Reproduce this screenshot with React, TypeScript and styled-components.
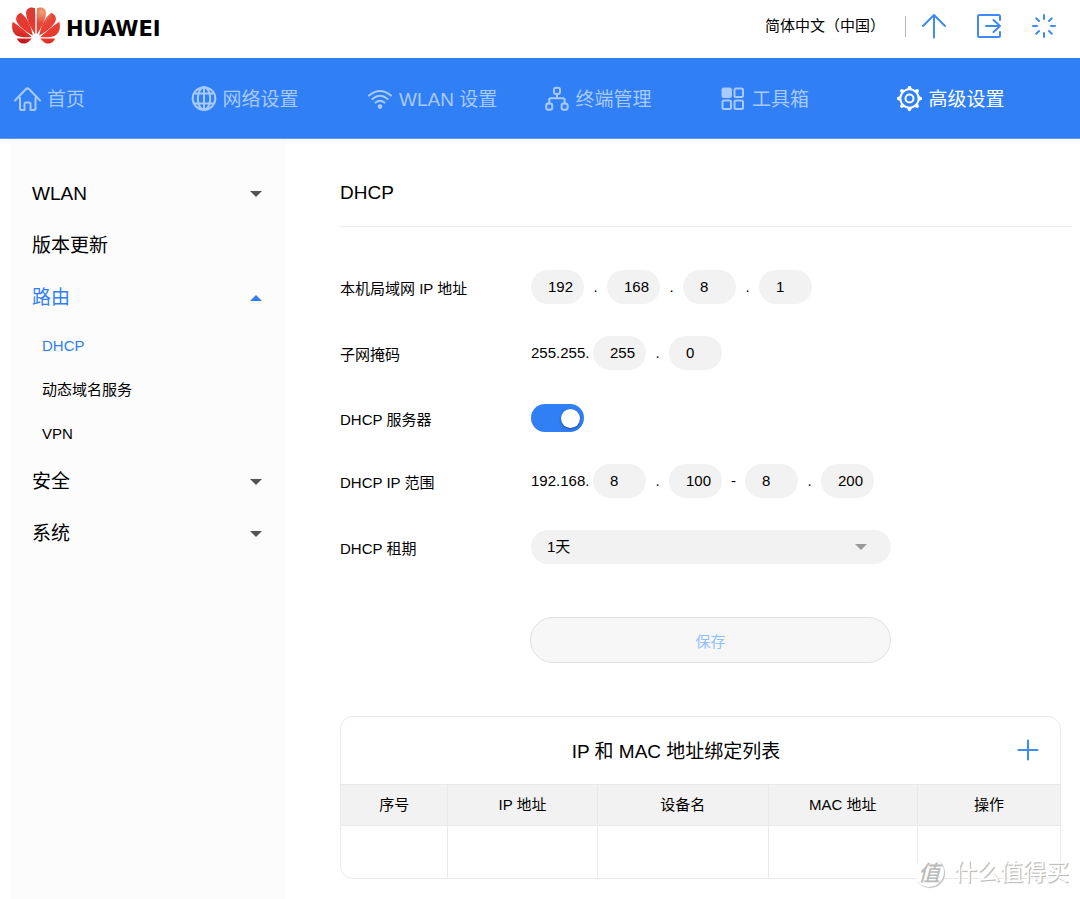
import React from "react";
import styled, { createGlobalStyle } from "styled-components";

const blue = "#317ff5";
const line = "#e9e9e9";
const fill = "#f2f2f2";
const sans = `"Liberation Sans", "Noto Sans CJK SC", sans-serif`;

const GlobalStyle = createGlobalStyle`
  *, *::before, *::after { box-sizing: border-box; }
  body { margin: 0; background: #fff; color: #000; font-family: ${sans}; font-size: 15px; line-height: 22px; }
  button, input, select { font: inherit; color: inherit; }
  a { color: inherit; text-decoration: none; }
  h1, h2, ul { margin: 0; padding: 0; font-weight: 400; list-style: none; }
  svg { display: block; flex: none; }
`;

const Page = styled.div`
  position: relative;
  display: flex;
  flex-direction: column;
  min-height: 100vh;
`;

/* ---------- Header ---------- */

const Header = styled.header`
  display: flex;
  align-items: center;
  justify-content: space-between;
  height: 58px;
  padding: 0 22px 6px 12px;
`;

const Brand = styled.a`
  display: flex;
  align-items: center;
  gap: 5px;
  font: 700 21px/30px "DejaVu Sans", ${sans};
`;

const BrandName = styled.span`
  padding-top: 6px;
`;

const HeaderTools = styled.div`
  display: flex;
  align-items: center;
`;

const LanguageButton = styled.button`
  padding: 0;
  border: 0;
  background: none;
  cursor: pointer;
`;

const Divider = styled.span`
  width: 1px;
  height: 21px;
  margin: 0 14px 0 20px;
  background: #b5b5b5;
`;

const ToolList = styled.div`
  display: flex;
  gap: 27px;
`;

const IconButton = styled.button`
  display: flex;
  padding: 0;
  border: 0;
  background: none;
  color: #3f89f8;
  cursor: pointer;
`;

/* ---------- Main navigation ---------- */

const Nav = styled.nav`
  display: grid;
  grid-template-columns: repeat(6, 1fr);
  align-items: center;
  height: 81px;
  padding: 2px 7px 0 14px;
  background: ${blue};
  border-bottom: 1px solid #5c99f6;
`;

const NavLink = styled.a<{ $active?: boolean }>`
  display: flex;
  align-items: center;
  gap: 6px;
  font-size: 19px;
  line-height: 28px;
  white-space: nowrap;
  color: ${(p) => (p.$active ? "#fff" : "#a8caff")};
`;

const NavText = styled.span`
  padding-top: 2px;
`;

/* ---------- Side menu ---------- */

const Body = styled.div`
  display: flex;
  flex: 1;
  padding-left: 11px;
`;

const Sidebar = styled.aside`
  flex: 0 0 275px;
  padding: 29px 0 40px;
  background: #fcfcfc;
`;

const MenuButton = styled.button<{ $open?: boolean }>`
  display: flex;
  align-items: center;
  justify-content: space-between;
  width: 100%;
  height: 52px;
  padding: 0 24px 0 21px;
  border: 0;
  background: none;
  font-size: 19px;
  line-height: 28px;
  text-align: left;
  color: ${(p) => (p.$open ? blue : "#000")};
  cursor: pointer;
`;

const Caret = styled.span<{ $up?: boolean; $color: string }>`
  width: 0;
  height: 0;
  border: solid transparent;
  border-width: 0 6px;
  ${(p) => (p.$up ? "border-bottom" : "border-top")}: 6px solid ${(p) => p.$color};
`;

const SubMenu = styled.ul`
  width: 100%;
`;

const SubLink = styled.a<{ $active?: boolean }>`
  display: flex;
  align-items: center;
  height: 44px;
  padding-left: 31px;
  color: ${(p) => (p.$active ? blue : "#000")};
`;

/* ---------- Content ---------- */

const Main = styled.main`
  flex: 1;
  min-width: 0;
  padding: 40px 8px 20px 54px;
`;

const Title = styled.h1`
  padding-bottom: 19px;
  border-bottom: 1px solid ${line};
  font-size: 19px;
  line-height: 28px;
`;

const Form = styled.form`
  display: flex;
  flex-direction: column;
  gap: 32px;
  padding-top: 43px;
`;

const Row = styled.div<{ $short?: boolean }>`
  display: grid;
  grid-template-columns: 191px 1fr;
  align-items: center;
  height: ${(p) => (p.$short ? 30 : 34)}px;
  padding-top: ${(p) => (p.$short ? 2 : 0)}px;
`;

const Label = styled.label`
  padding-top: 3px;
`;

const Fields = styled.div`
  display: flex;
  align-items: center;
`;

const Prefix = styled.span`
  width: 62px;
`;

const Separator = styled.span`
  width: 23px;
  text-align: center;
`;

const Octet = styled.input`
  width: 53px;
  height: 34px;
  padding: 0 2px 2px 17px;
  border: 0;
  border-radius: 17px;
  background: ${fill};
`;

const Switch = styled.input`
  appearance: none;
  display: flex;
  align-items: center;
  justify-content: flex-end;
  width: 53px;
  height: 28px;
  margin: 0;
  padding: 0 4px;
  border-radius: 14px;
  background: ${blue};
  cursor: pointer;

  &::before {
    content: "";
    width: 19px;
    height: 19px;
    border-radius: 50%;
    background: #fff;
    box-shadow: 0 1px 3px rgba(0, 0, 0, 0.4);
  }

  &:not(:checked) {
    justify-content: flex-start;
    background: #ccc;
  }
`;

const SelectBox = styled.div`
  display: grid;
  grid-template-columns: 1fr 36px;
  align-items: center;
  width: 360px;

  & > * {
    grid-row: 1;
  }

  & > select {
    grid-column: 1 / -1;
  }

  & > span {
    grid-column: 2;
    pointer-events: none;
  }
`;

const Select = styled.select`
  appearance: none;
  width: 100%;
  height: 34px;
  padding: 0 40px 0 16px;
  border: 0;
  border-radius: 17px;
  background: ${fill};
`;

const SaveButton = styled.button`
  width: 361px;
  height: 46px;
  margin: 21px 0 0 190px;
  padding: 4px 0 0;
  border: 1px solid #e0e0e0;
  border-radius: 23px;
  background: #f7f7f7;
  color: #8fbfff;
`;

const Card = styled.section`
  margin: 53px 11px 0 0;
  border: 1px solid ${line};
  border-radius: 13px;
  overflow: hidden;
`;

const CardHead = styled.div`
  display: flex;
  align-items: center;
  height: 67px;
  padding: 0 21px 2px 0;
`;

const CardTitle = styled.h2`
  flex: 1;
  padding: 4px 6px 0 0;
  font-size: 19px;
  line-height: 28px;
  text-align: center;
`;

const Table = styled.table`
  width: 100%;
  border-collapse: collapse;
  table-layout: fixed;

  th,
  td {
    padding: 0;
    border-top: 1px solid ${line};
    border-left: 1px solid ${line};
  }

  th:first-child,
  td:first-child {
    border-left: 0;
  }

  th {
    height: 41px;
    background: ${fill};
    font-weight: 400;
  }

  td {
    height: 52px;
  }
`;

/* ---------- Corner stamp ---------- */

const Stamp = styled.div`
  position: absolute;
  right: 11px;
  bottom: 11px;
  display: flex;
  align-items: center;
  gap: 10px;
  color: #fff;
  font-size: 23px;
  line-height: 32px;
  text-shadow: 1px 1px 1px #bbb, 1px 1px 0 #ccc;
  pointer-events: none;
`;

const StampSeal = styled.span`
  width: 30px;
  height: 30px;
  border-radius: 50%;
  background: #fff;
  box-shadow: 1px 1px 1px #bbb;
  color: #bbb;
  font: italic 500 22px/28px "Noto Sans CJK SC", sans-serif;
  text-align: center;
  text-shadow: none;
`;

/* ---------- Icons ---------- */

const Icon = ({ size = 26, children }: { size?: number; children: React.ReactNode }) => (
  <svg
    width={size}
    height={size}
    viewBox={`0 0 ${size} ${size}`}
    fill="none"
    stroke="currentColor"
    strokeWidth={2}
    strokeLinecap="round"
    strokeLinejoin="round"
    aria-hidden="true"
  >
    {children}
  </svg>
);

const petals = [
  "M24.8 27.5C24.6 18 24.6 9 25 1.2C29 -.6 33.6 1 33.9 5.5C34.1 12 29.5 20 24.8 27.5Z",
  "M27.2 28.6C28.6 21 31.4 12 39.2 5.8C43.6 7.6 45 11.4 43 15.2C39.6 20.8 33.6 25 27.2 28.6Z",
  "M28.2 30C34.4 24.8 40.6 19.2 47.2 14.8C49 20.2 47.4 26.6 42.6 29C38.4 30.4 33 30.4 28.2 30Z",
  "M28.2 31.4L43.2 31.6C41.6 35.6 37.8 37.4 34 36.2C31.8 35.2 30 33.4 28.2 31.4Z",
];

const LogoMark = () => (
  <svg width="49" height="38" viewBox="0 0 49 38" aria-hidden="true">
    <defs>
      <linearGradient id="petalLeft" gradientUnits="userSpaceOnUse" x1="30" y1="0" x2="42" y2="37">
        <stop offset="0" stopColor="#d93a34" />
        <stop offset=".6" stopColor="#e8392f" />
        <stop offset="1" stopColor="#b01318" />
      </linearGradient>
      <radialGradient id="petalRight" gradientUnits="userSpaceOnUse" cx="30" cy="5" r="38">
        <stop offset="0" stopColor="#f3a376" />
        <stop offset=".3" stopColor="#e5473a" />
        <stop offset=".75" stopColor="#e93529" />
        <stop offset="1" stopColor="#bd1a1b" />
      </radialGradient>
    </defs>
    {petals.map((d) => (
      <g key={d}>
        <path d={d} fill="url(#petalRight)" />
        <path d={d} fill="url(#petalLeft)" transform="translate(48 0) scale(-1 1)" />
      </g>
    ))}
  </svg>
);

const HomeIcon = () => (
  <Icon size={27}>
    <path d="M1 14.5L11.8 3.2Q13.5 1.6 15.2 3.2L26 14.5M6 12V22.5Q6 24 7.5 24H10.5V18Q10.5 16.5 12 16.5H15Q16.5 16.5 16.5 18V24H20Q21.5 24 21.5 22.5V12" />
  </Icon>
);

const GlobeIcon = () => (
  <Icon>
    <circle cx="13" cy="12.5" r="11.3" />
    <path d="M13 1.5V23.5M3.5 7.5H22.5M3.5 17.5H22.5" />
    <ellipse cx="13" cy="12.5" rx="6.2" ry="11.3" />
  </Icon>
);

const WifiIcon = () => (
  <Icon>
    <path d="M2 9.6Q13 .5 24 9.6M5.3 13Q13 6.6 20.7 13M8.6 16.6Q13 12.8 17.4 16.6" />
    <circle cx="13" cy="20.6" r="1.4" fill="currentColor" />
  </Icon>
);

const DevicesIcon = () => (
  <Icon>
    <rect x="10" y="1.8" width="6" height="6.2" rx="2" />
    <rect x="2.2" y="17.6" width="6" height="6.2" rx="2" />
    <rect x="17.6" y="17.6" width="6" height="6.2" rx="2" />
    <path d="M13 8V12.3M5.2 17.6V13.8Q5.2 12.3 6.7 12.3H19.1Q20.6 12.3 20.6 13.8V17.6" />
  </Icon>
);

const ToolboxIcon = () => (
  <Icon>
    <rect x="2.5" y="2.5" width="8.5" height="8.5" rx="1.5" fill="currentColor" />
    <rect x="14.5" y="2.5" width="8.5" height="8.5" rx="1.5" />
    <rect x="2.5" y="14.5" width="8.5" height="8.5" rx="1.5" />
    <rect x="14.5" y="14.5" width="8.5" height="8.5" rx="1.5" />
  </Icon>
);

const GearIcon = () => (
  <Icon>
    <circle cx="12.5" cy="12.5" r="9.2" />
    <circle cx="12.5" cy="12.5" r="4" />
    {[0, 45, 90, 135, 180, 225, 270, 315].map((a) => (
      <path
        key={a}
        d="M10 3.2L11.3 .3Q12.5 -.6 13.7 .3L15 3.2Z"
        fill="currentColor"
        stroke="none"
        transform={`rotate(${a} 12.5 12.5)`}
      />
    ))}
  </Icon>
);

const navItems = [
  { text: "首页", icon: <HomeIcon /> },
  { text: "网络设置", icon: <GlobeIcon /> },
  { text: "WLAN 设置", icon: <WifiIcon /> },
  { text: "终端管理", icon: <DevicesIcon /> },
  { text: "工具箱", icon: <ToolboxIcon /> },
  { text: "高级设置", icon: <GearIcon />, active: true },
];

const OctetGroup = ({ id, name, parts }: { id: string; name: string; parts: string[] }) => (
  <>
    {parts.map((part, i) =>
      i % 2 ? (
        <Separator key={i}>{part}</Separator>
      ) : (
        <Octet key={i} id={i === 0 ? id : undefined} aria-label={`${name} ${i / 2 + 1}`} defaultValue={part} />
      )
    )}
  </>
);

export default function App() {
  return (
    <Page lang="zh-CN">
      <GlobalStyle />
      <Header>
        <Brand href="#">
          <LogoMark />
          <BrandName>HUAWEI</BrandName>
        </Brand>
        <HeaderTools>
          <LanguageButton type="button">简体中文（中国）</LanguageButton>
          <Divider />
          <ToolList>
            <IconButton type="button" aria-label="更新">
              <Icon size={28}>
                <path d="M14 25.5V3.5M3 14L14 3L25 14" />
              </Icon>
            </IconButton>
            <IconButton type="button" aria-label="退出">
              <Icon size={28}>
                <path d="M25 8V4.5Q25 3 23.5 3H4.5Q3 3 3 4.5V23.5Q3 25 4.5 25H23.5Q25 25 25 23.5V20M11 14H25M18.5 8L25 14L18.5 20" />
              </Icon>
            </IconButton>
            <IconButton type="button" aria-label="重启">
              <Icon size={28}>
                {[0, 45, 90, 135, 180, 225, 270, 315].map((a) => (
                  <path key={a} d="M14 3V7" transform={`rotate(${a} 14 14)`} />
                ))}
              </Icon>
            </IconButton>
          </ToolList>
        </HeaderTools>
      </Header>

      <Nav>
        {navItems.map((item) => (
          <NavLink key={item.text} href="#" $active={item.active}>
            {item.icon}
            <NavText>{item.text}</NavText>
          </NavLink>
        ))}
      </Nav>

      <Body>
        <Sidebar>
          <MenuButton type="button">
            WLAN
            <Caret $color="#555" />
          </MenuButton>
          <MenuButton type="button">版本更新</MenuButton>
          <MenuButton type="button" $open>
            路由
            <Caret $up $color={blue} />
          </MenuButton>
          <SubMenu>
            <li>
              <SubLink href="#" $active>
                DHCP
              </SubLink>
            </li>
            <li>
              <SubLink href="#">动态域名服务</SubLink>
            </li>
            <li>
              <SubLink href="#">VPN</SubLink>
            </li>
          </SubMenu>
          <MenuButton type="button">
            安全
            <Caret $color="#555" />
          </MenuButton>
          <MenuButton type="button">
            系统
            <Caret $color="#555" />
          </MenuButton>
        </Sidebar>

        <Main>
          <Title>DHCP</Title>
          <Form onSubmit={(e) => e.preventDefault()}>
            <Row>
              <Label htmlFor="lan">本机局域网 IP 地址</Label>
              <Fields>
                <OctetGroup id="lan" name="IP 地址" parts={["192", ".", "168", ".", "8", ".", "1"]} />
              </Fields>
            </Row>
            <Row>
              <Label htmlFor="mask">子网掩码</Label>
              <Fields>
                <Prefix>255.255.</Prefix>
                <OctetGroup id="mask" name="子网掩码" parts={["255", ".", "0"]} />
              </Fields>
            </Row>
            <Row $short>
              <Label htmlFor="server">DHCP 服务器</Label>
              <Fields>
                <Switch id="server" type="checkbox" role="switch" defaultChecked />
              </Fields>
            </Row>
            <Row>
              <Label htmlFor="range">DHCP IP 范围</Label>
              <Fields>
                <Prefix>192.168.</Prefix>
                <OctetGroup id="range" name="IP 范围" parts={["8", ".", "100", "-", "8", ".", "200"]} />
              </Fields>
            </Row>
            <Row>
              <Label htmlFor="lease">DHCP 租期</Label>
              <SelectBox>
                <Select id="lease" defaultValue="1">
                  <option value="1">1天</option>
                </Select>
                <Caret $color="#999" />
              </SelectBox>
            </Row>
            <SaveButton type="submit">保存</SaveButton>
          </Form>

          <Card>
            <CardHead>
              <CardTitle>IP 和 MAC 地址绑定列表</CardTitle>
              <IconButton type="button" aria-label="添加">
                <Icon size={22}>
                  <path d="M11 1.5V20.5M1.5 11H20.5" />
                </Icon>
              </IconButton>
            </CardHead>
            <Table>
              <colgroup>
                <col width="15%" />
                <col width="21%" />
                <col width="24%" />
                <col width="21%" />
                <col width="20%" />
              </colgroup>
              <thead>
                <tr>
                  <th scope="col">序号</th>
                  <th scope="col">IP 地址</th>
                  <th scope="col">设备名</th>
                  <th scope="col">MAC 地址</th>
                  <th scope="col">操作</th>
                </tr>
              </thead>
              <tbody>
                <tr>
                  <td />
                  <td />
                  <td />
                  <td />
                  <td />
                </tr>
              </tbody>
            </Table>
          </Card>
        </Main>
      </Body>

      <Stamp>
        <StampSeal>值</StampSeal>
        什么值得买
      </Stamp>
    </Page>
  );
}
